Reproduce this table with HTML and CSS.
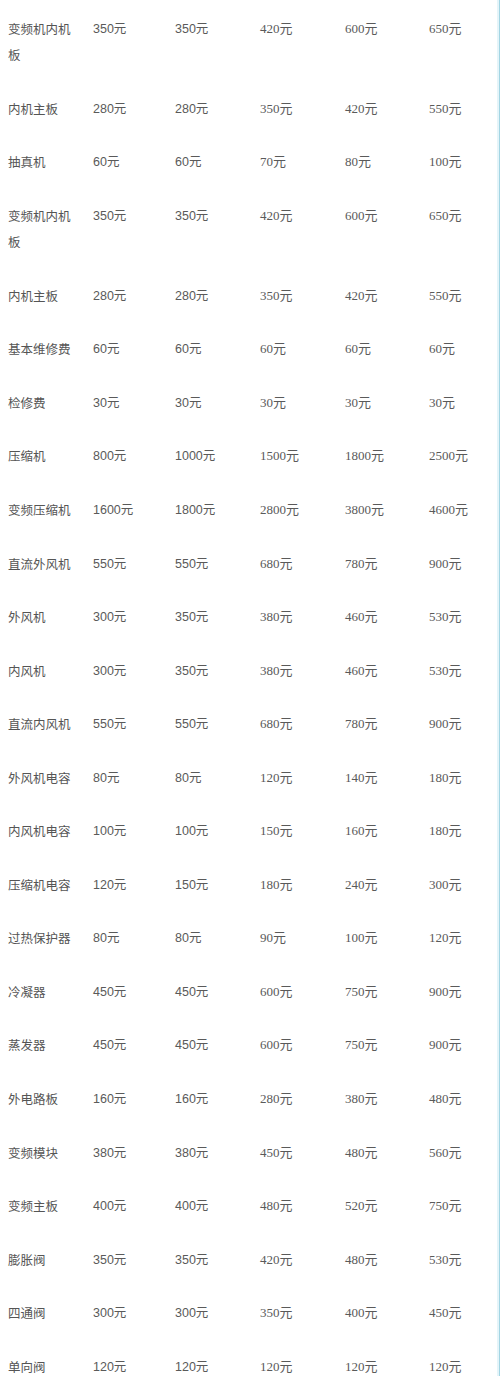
FILE: index.html
```html
<!DOCTYPE html>
<html lang="zh">
<head>
<meta charset="utf-8">
<title>维修价格表</title>
<link rel="stylesheet" href="styles.css">
</head>
<body>
<div class="page">
  <div class="price-table">
    <div class="row"><span class="c name">变频机内机板</span><span class="c">350元</span><span class="c">350元</span><span class="c">420元</span><span class="c">600元</span><span class="c">650元</span></div>
    <div class="row"><span class="c name">内机主板</span><span class="c">280元</span><span class="c">280元</span><span class="c">350元</span><span class="c">420元</span><span class="c">550元</span></div>
    <div class="row"><span class="c name">抽真机</span><span class="c">60元</span><span class="c">60元</span><span class="c">70元</span><span class="c">80元</span><span class="c">100元</span></div>
    <div class="row"><span class="c name">变频机内机板</span><span class="c">350元</span><span class="c">350元</span><span class="c">420元</span><span class="c">600元</span><span class="c">650元</span></div>
    <div class="row"><span class="c name">内机主板</span><span class="c">280元</span><span class="c">280元</span><span class="c">350元</span><span class="c">420元</span><span class="c">550元</span></div>
    <div class="row"><span class="c name">基本维修费</span><span class="c">60元</span><span class="c">60元</span><span class="c">60元</span><span class="c">60元</span><span class="c">60元</span></div>
    <div class="row"><span class="c name">检修费</span><span class="c">30元</span><span class="c">30元</span><span class="c">30元</span><span class="c">30元</span><span class="c">30元</span></div>
    <div class="row"><span class="c name">压缩机</span><span class="c">800元</span><span class="c">1000元</span><span class="c">1500元</span><span class="c">1800元</span><span class="c">2500元</span></div>
    <div class="row"><span class="c name">变频压缩机</span><span class="c">1600元</span><span class="c">1800元</span><span class="c">2800元</span><span class="c">3800元</span><span class="c">4600元</span></div>
    <div class="row"><span class="c name">直流外风机</span><span class="c">550元</span><span class="c">550元</span><span class="c">680元</span><span class="c">780元</span><span class="c">900元</span></div>
    <div class="row"><span class="c name">外风机</span><span class="c">300元</span><span class="c">350元</span><span class="c">380元</span><span class="c">460元</span><span class="c">530元</span></div>
    <div class="row"><span class="c name">内风机</span><span class="c">300元</span><span class="c">350元</span><span class="c">380元</span><span class="c">460元</span><span class="c">530元</span></div>
    <div class="row"><span class="c name">直流内风机</span><span class="c">550元</span><span class="c">550元</span><span class="c">680元</span><span class="c">780元</span><span class="c">900元</span></div>
    <div class="row"><span class="c name">外风机电容</span><span class="c">80元</span><span class="c">80元</span><span class="c">120元</span><span class="c">140元</span><span class="c">180元</span></div>
    <div class="row"><span class="c name">内风机电容</span><span class="c">100元</span><span class="c">100元</span><span class="c">150元</span><span class="c">160元</span><span class="c">180元</span></div>
    <div class="row"><span class="c name">压缩机电容</span><span class="c">120元</span><span class="c">150元</span><span class="c">180元</span><span class="c">240元</span><span class="c">300元</span></div>
    <div class="row"><span class="c name">过热保护器</span><span class="c">80元</span><span class="c">80元</span><span class="c">90元</span><span class="c">100元</span><span class="c">120元</span></div>
    <div class="row"><span class="c name">冷凝器</span><span class="c">450元</span><span class="c">450元</span><span class="c">600元</span><span class="c">750元</span><span class="c">900元</span></div>
    <div class="row"><span class="c name">蒸发器</span><span class="c">450元</span><span class="c">450元</span><span class="c">600元</span><span class="c">750元</span><span class="c">900元</span></div>
    <div class="row"><span class="c name">外电路板</span><span class="c">160元</span><span class="c">160元</span><span class="c">280元</span><span class="c">380元</span><span class="c">480元</span></div>
    <div class="row"><span class="c name">变频模块</span><span class="c">380元</span><span class="c">380元</span><span class="c">450元</span><span class="c">480元</span><span class="c">560元</span></div>
    <div class="row"><span class="c name">变频主板</span><span class="c">400元</span><span class="c">400元</span><span class="c">480元</span><span class="c">520元</span><span class="c">750元</span></div>
    <div class="row"><span class="c name">膨胀阀</span><span class="c">350元</span><span class="c">350元</span><span class="c">420元</span><span class="c">480元</span><span class="c">530元</span></div>
    <div class="row"><span class="c name">四通阀</span><span class="c">300元</span><span class="c">300元</span><span class="c">350元</span><span class="c">400元</span><span class="c">450元</span></div>
    <div class="row"><span class="c name">单向阀</span><span class="c">120元</span><span class="c">120元</span><span class="c">120元</span><span class="c">120元</span><span class="c">120元</span></div>
  </div>
</div>
</body>
</html>
```
FILE: styles.css
```css
html, body {
  margin: 0;
  padding: 0;
  background: #ffffff;
}

.page {
  box-sizing: border-box;
  width: 500px;
  min-height: 1376px;
  padding-top: 2px;
  border-right: 1px solid #a3d5e3;
  box-shadow: inset -2px 0 0 #e4f4f9;
  overflow: hidden;
}

.price-table {
  display: flex;
  flex-direction: column;
  padding-left: 8px;
}

.row {
  display: grid;
  grid-template-columns: 85px 82px 85px 85px 84px 1fr;
}

.c {
  padding: 13.5px 12px 13.5px 0;
  font-family: "Liberation Sans", "Noto Sans CJK SC", sans-serif;
  font-size: 12.5px;
  line-height: 26.55px;
  color: #5a5a5a;
}

.c.name {
  font-family: "Noto Sans CJK SC", sans-serif;
  color: #555555;
}

.row .c:nth-child(n+4) {
  font-family: "Liberation Serif", "Noto Sans CJK SC", serif;
  font-size: 13px;
}
```
